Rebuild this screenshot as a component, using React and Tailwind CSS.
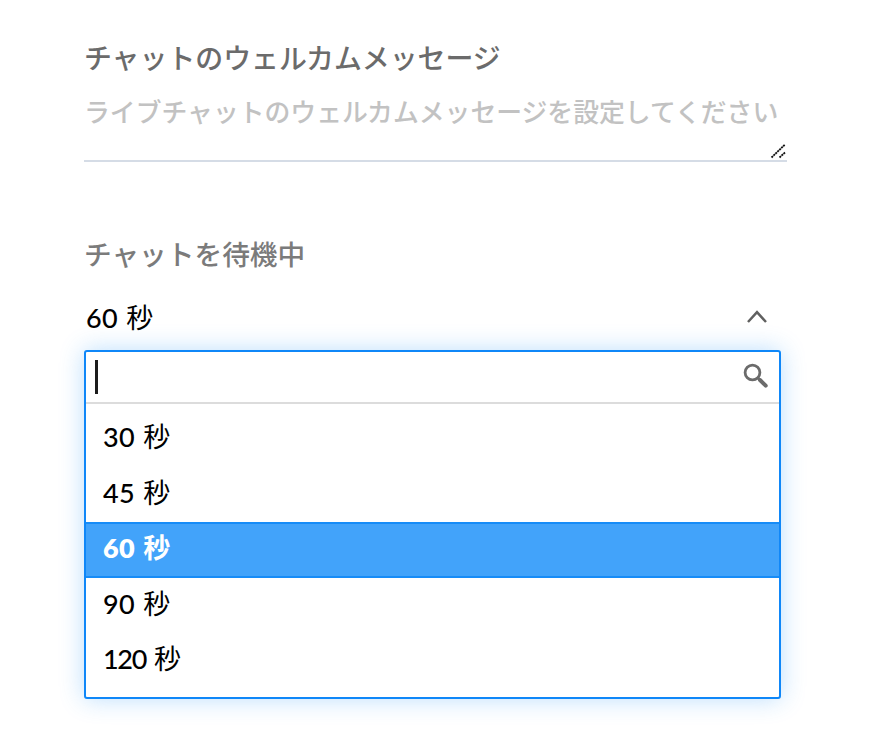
import { useState } from "react";
import clsx from "clsx";

const options = ["30", "45", "60", "90", "120"];

const ResizeHandle = () => {
  return (
    <svg
      className="absolute right-px bottom-px"
      width="16"
      height="16"
      viewBox="0 0 16 16"
      fill="none"
      stroke="#111"
      strokeWidth="1.8"
      strokeDasharray="2.1 0.6"
    >
      <path d="M1.5 14.5L15 1.5" />
      <path d="M9.5 14.5L15 9.5" />
    </svg>
  );
};

const ChevronUp = () => {
  return (
    <svg
      width="20"
      height="14"
      viewBox="0 0 20 14"
      fill="none"
      stroke="#606060"
      strokeWidth="2.5"
    >
      <path d="M1 12L10 2.2L19 12" />
    </svg>
  );
};

const SearchIcon = () => {
  return (
    <svg
      width="26"
      height="26"
      viewBox="0 0 26 26"
      fill="none"
      stroke="#6b6b6b"
    >
      <circle cx="9.5" cy="9.5" r="7.4" strokeWidth="2.8" />
      <path d="M15 15L17 17" strokeWidth="3" />
      <path d="M17 17L22.7 22.7" strokeWidth="4" strokeLinecap="round" />
    </svg>
  );
};

const Seconds = ({ value, bold }) => {
  return (
    <span className="flex items-baseline whitespace-nowrap text-[27px]">
      <span
        className={clsx(
          bold ? "font-extrabold" : "font-medium",
          value === "120" ? "-tracking-[1.3px]" : "tracking-[0.4px]"
        )}
      >
        {value}
      </span>
      <span className={clsx("ml-[8px]", bold ? "font-bold" : "font-normal")}>
        秒
      </span>
    </span>
  );
};

const App = () => {
  const [selected, setSelected] = useState("60");

  return (
    <div className="w-[875px] h-[730px] overflow-hidden bg-white pl-[84px] font-[Lato,'Noto_Sans_CJK_JP',sans-serif] font-medium text-black">
      <div className="pt-[38px] w-[703px]">
        <div className="h-[40px] text-[27.9px] leading-[40px] text-[#6b6b6b] whitespace-nowrap">
          チャットのウェルカムメッセージ
        </div>
        <div className="relative h-[84px] border-b-2 border-[#d5dce6]">
          <div className="pt-[14px] text-[25.84px] leading-[40px] text-[#c2c2c2] whitespace-nowrap">
            ライブチャットのウェルカムメッセージを設定してください
          </div>
          <ResizeHandle />
        </div>
      </div>
      <div className="mt-[73px] w-[697px]">
        <div className="h-[40px] text-[27.7px] leading-[40px] text-[#7b7b7b] whitespace-nowrap">
          チャットを待機中
        </div>
        <div className="mt-[15px] h-[60px] flex justify-between pl-[2px] pr-[14px]">
          <div className="h-[56px] flex items-center">
            <Seconds value={selected} />
          </div>
          <div className="pt-[20px]">
            <ChevronUp />
          </div>
        </div>
        <div className="h-[349px] rounded-[3px] border-2 border-[#0f87f8] bg-white shadow-[0_0_24px_rgba(30,145,250,0.3)]">
          <div className="h-[52px] flex justify-between border-b-2 border-[#dcdcdc] pl-[9px] pr-[10px]">
            <div className="mt-[8px] h-[34px] w-[3px] bg-[#1c1c1c]" />
            <div className="pt-[11px]">
              <SearchIcon />
            </div>
          </div>
          <div className="pt-[7px]">
            {options.map((value) => (
              <div
                key={value}
                onClick={() => {
                  setSelected(value);
                }}
                className={clsx(
                  "h-[55.5px] pb-[3px] flex items-center pl-[17px]",
                  value === selected &&
                    "bg-[#42a3fa] border-y-2 border-[#178cf7] text-white"
                )}
              >
                <Seconds value={value} bold={value === selected} />
              </div>
            ))}
          </div>
        </div>
      </div>
    </div>
  );
};

export default App;
